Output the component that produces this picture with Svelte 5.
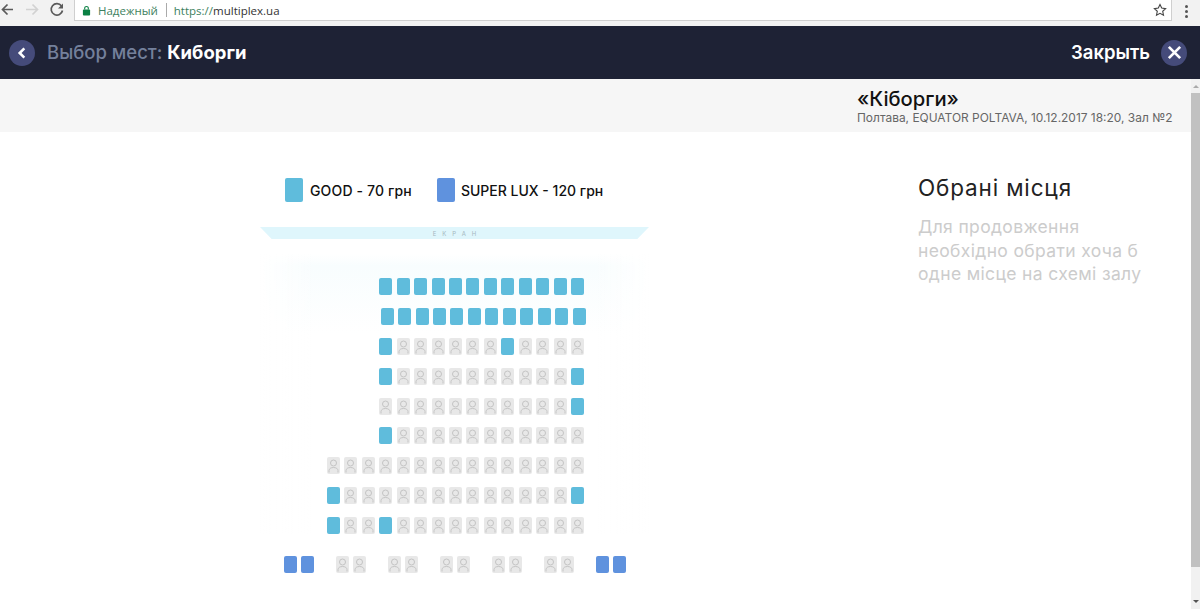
<script>
  const G = 'good';
  // seat rows: how many seats, and which of them are free
  const rows = [
    { count: 12, free: [0, 1, 2, 3, 4, 5, 6, 7, 8, 9, 10, 11] },
    { count: 12, free: [0, 1, 2, 3, 4, 5, 6, 7, 8, 9, 10, 11], shift: true },
    { count: 12, free: [0, 7] },
    { count: 12, free: [0, 11] },
    { count: 12, free: [11] },
    { count: 12, free: [0] },
    { count: 15, free: [] },
    { count: 15, free: [0, 14] },
    { count: 15, free: [0, 3] }
  ];

  const pairs = [true, false, false, false, false, false, true];

  function range(n) {
    return Array.from({ length: n }, (_, i) => i);
  }
</script>

{#snippet seat(kind)}
  <div class="seat {kind}">
    {#if kind === 'taken'}
      <svg viewBox="0 0 13 17" width="13" height="17" fill="none" stroke="#c4c4c4" stroke-width="1">
        <circle cx="6.5" cy="6" r="3" />
        <path d="M2 15.5v-2c0-1.800 2-3 4.500-3s4.500 1.200 4.500 3v2" />
      </svg>
    {/if}
  </div>
{/snippet}

<div class="page">
  <div class="browser">
    <svg class="nav" viewBox="0 0 74 20" width="74" height="20" fill="none" stroke-width="1.7">
      <path d="M13 8.500H2.500M7.500 3.500l-5 5 5 5" stroke="#5a5a5a" />
      <path d="M26 8.500h11.500M32.500 3.500l5 5-5 5" stroke="#d2d2d2" />
      <path d="M61.500 5a5.700 5.700 0 1 0 1 4.500" stroke="#5a5a5a" />
      <path d="M63 2.500v5h-5z" fill="#5a5a5a" stroke="none" />
    </svg>
    <div class="address">
      <svg viewBox="0 0 10 12" width="9" height="11">
        <rect x="1" y="5" width="8" height="6.500" rx="1" fill="#0b8043" />
        <path d="M3 5V3.500a2 2 0 0 1 4 0V5" fill="none" stroke="#0b8043" stroke-width="1.200" />
      </svg>
      <span class="secure label">Надежный</span>
      <span class="sep"></span>
      <span class="url"><span class="secure">https://</span>multiplex.ua</span>
      <svg class="star" viewBox="0 0 14 14" width="14" height="14" fill="none" stroke="#444" stroke-width="1.100">
        <path d="M7 1.500l1.700 3.600 3.900.5-2.900 2.700.8 3.900L7 10.300l-3.500 1.900.8-3.900L1.400 5.600l3.900-.5z" />
      </svg>
    </div>
    <div class="dots"><i></i><i></i><i></i></div>
  </div>

  <header class="head">
    <div class="title-wrap">
      <span class="round">
        <svg viewBox="0 0 12 12" width="14" height="14" fill="none" stroke="#fff" stroke-width="2.200">
          <path d="M8 2L4 6l4 4" />
        </svg>
      </span>
      <span class="step">Выбор мест: <b>Киборги</b></span>
    </div>
    <div class="close">
      <span>Закрыть</span>
      <span class="round">
        <svg viewBox="0 0 12 12" width="17" height="17" fill="none" stroke="#fff" stroke-width="1.900">
          <path d="M2 2l8 8M10 2l-8 8" />
        </svg>
      </span>
    </div>
  </header>

  <div class="below">
    <div class="content">
      <div class="film">
        <div class="film-name">«Кіборги»</div>
        <div class="film-info">Полтава, EQUATOR POLTAVA, 10.12.2017 18:20, Зал №2</div>
      </div>

      <div class="main">
        <section class="hall">
          <div class="legend">
            <div class="legend-item">
              <span class="swatch good"></span>
              <span>GOOD - 70 грн</span>
            </div>
            <div class="legend-item lux-item">
              <span class="swatch lux"></span>
              <span>SUPER LUX - 120 грн</span>
            </div>
          </div>

          <div class="screen"><span>ЕКРАН</span></div>

          <div class="glow">
            <div class="rows">
              {#each rows as row}
                <div class="row" class:shift={row.shift}>
                  {#each range(row.count) as i}
                    {@render seat(row.free.includes(i) ? G : 'taken')}
                  {/each}
                </div>
              {/each}
            </div>
          </div>

          <div class="pairs">
            {#each pairs as lux}
              <div class="pair">
                {@render seat(lux ? 'lux' : 'taken')}
                {@render seat(lux ? 'lux' : 'taken')}
              </div>
            {/each}
          </div>
        </section>

        <aside class="side">
          <h2>Обрані місця</h2>
          <p>Для продовження необхідно обрати хоча б одне місце на схемі залу</p>
        </aside>
      </div>
    </div>

    <div class="scrollbar">
      <span class="arrow up"></span>
      <div class="thumb"></div>
      <span class="arrow down"></span>
    </div>
  </div>
</div>

<style>
  :global(body) {
    margin: 0;
    background: #fff;
    overflow: hidden;
  }

  .page {
    height: 609px;
    display: flex;
    flex-direction: column;
    font-family: Inter, 'Liberation Sans', sans-serif;
    color: #111;
    overflow: hidden;
  }

  .browser {
    height: 26px;
    box-sizing: border-box;
    flex: none;
    display: flex;
    align-items: flex-start;
    background: #f2f2f2;
  }
  .nav {
    flex: none;
    margin-top: 1px;
  }
  .address {
    width: 1098px;
    height: 21px;
    box-sizing: border-box;
    background: #fff;
    border: 1px solid #cfcfcf;
    border-top: none;
    display: flex;
    align-items: center;
    padding: 0 4px 0 7px;
    font-family: 'Open Sans', 'Liberation Sans', sans-serif;
    font-size: 11.500px;
    color: #333;
  }
  .secure {
    color: #3d7f5e;
  }
  .label {
    margin-left: 7px;
  }
  .sep {
    width: 1px;
    height: 14px;
    background: #aaa;
    margin: 0 7px 0 8px;
  }
  .url {
    flex: 1;
  }
  .dots {
    display: flex;
    flex-direction: column;
    gap: 2px;
    margin: 5px 0 0 13px;
  }
  .dots i {
    width: 3px;
    height: 3px;
    border-radius: 50%;
    background: #555;
  }

  .head {
    height: 53px;
    flex: none;
    background: #1e2235;
    display: flex;
    align-items: center;
    justify-content: space-between;
    padding: 0 13px 0 9px;
    color: #fff;
    font-size: 18.500px;
    font-weight: 600;
  }
  .title-wrap,
  .close {
    display: flex;
    align-items: center;
    gap: 11px;
  }
  .title-wrap {
    gap: 12px;
  }
  .title-wrap > span:last-child,
  .close > span:first-child {
    padding-bottom: 2px;
  }
  .step {
    color: #74809b;
    font-weight: 500;
  }
  .step b {
    color: #fff;
    font-weight: 700;
  }
  .round {
    width: 26px;
    height: 26px;
    border-radius: 50%;
    background: #454b7a;
    display: flex;
    align-items: center;
    justify-content: center;
  }

  .below {
    flex: 1;
    display: flex;
    min-height: 0;
  }
  .content {
    flex: 1;
    min-width: 0;
  }

  .film {
    height: 53px;
    box-sizing: border-box;
    background: #f6f6f6;
    padding: 10px 0 0 857px;
  }
  .film-name {
    font-size: 20.200px;
    font-weight: 500;
    line-height: 20px;
  }
  .film-info {
    font-size: 11.950px;
    line-height: 17px;
    color: #666;
    white-space: nowrap;
  }

  .main {
    display: flex;
  }
  .hall {
    width: 918px;
    flex: none;
    box-sizing: border-box;
    padding-top: 46px;
  }
  .legend {
    display: flex;
    gap: 25px;
    margin-left: 285px;
    font-size: 14px;
    font-weight: 500;
    letter-spacing: 0.15px;
  }
  .legend-item {
    display: flex;
    align-items: center;
    gap: 7px;
  }
  .lux-item {
    gap: 6px;
    letter-spacing: 0;
  }
  .legend-item span:last-child {
    padding-top: 1px;
  }
  .swatch {
    width: 18px;
    height: 24px;
    border-radius: 2px;
  }
  .swatch.good {
    background: #5fbcdc;
  }
  .swatch.lux {
    background: #5f92de;
  }

  .screen {
    width: 389px;
    height: 12px;
    margin: 25px 0 0 260px;
    background: #dff6fc;
    clip-path: polygon(0 0, 100% 0, 97% 100%, 3% 100%);
    display: flex;
    align-items: center;
    justify-content: center;
  }
  .screen span {
    font-size: 6px;
    letter-spacing: 6px;
    color: #a5b8c0;
    padding-left: 6px;
  }

  .glow {
    width: 389px;
    margin: 15px 0 0 260px;
    padding-top: 24px;
    background:
      linear-gradient(90deg, #fff, transparent 14%, transparent 86%, #fff),
      linear-gradient(#fff, #f8fdfe 12px, #fff 80px);
  }
  .rows {
    display: flex;
    flex-direction: column;
    gap: 12.900px;
  }
  .row {
    align-self: flex-end;
    display: flex;
    gap: 4.450px;
    padding-right: 65px;
  }
  .row.shift {
    padding-right: 63.500px;
  }

  .pairs {
    display: flex;
    gap: 21.600px;
    margin: 22px 0 0 284px;
  }
  .pair {
    display: flex;
    gap: 4.400px;
  }

  .seat {
    width: 13px;
    height: 17px;
    flex: none;
    border-radius: 2px;
  }
  .seat.good {
    background: #5fbcdc;
  }
  .seat.lux {
    background: #5f92de;
  }
  .seat.taken {
    background: #e8e8e8;
  }
  .seat svg {
    display: block;
  }

  .side {
    padding-top: 42px;
  }
  .side h2 {
    margin: 0;
    font-size: 22.500px;
    font-weight: 400;
    letter-spacing: 0.85px;
    line-height: 28px;
    color: #222;
  }
  .side p {
    margin: 13px 0 0;
    width: 232px;
    font-size: 17.500px;
    letter-spacing: 0.35px;
    line-height: 23.500px;
    color: #ccc;
  }

  .scrollbar {
    width: 9px;
    flex: none;
    background: #f1f1f1;
    display: flex;
    flex-direction: column;
    align-items: center;
  }
  .thumb {
    width: 100%;
    height: 474px;
    background: #c1c1c1;
  }
  .arrow {
    width: 0;
    height: 0;
    border-left: 3px solid transparent;
    border-right: 3px solid transparent;
  }
  .arrow.up {
    border-bottom: 3px solid #aaa;
    margin: 6px 0 5px;
  }
  .arrow.down {
    border-top: 3px solid #555;
    margin-top: 33px;
  }
</style>
